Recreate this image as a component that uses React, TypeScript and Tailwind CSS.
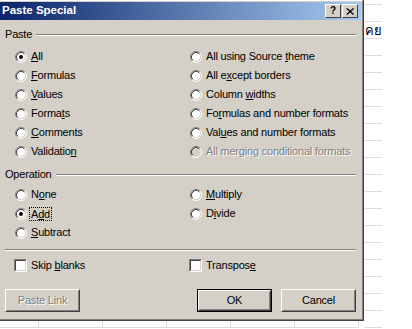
import React from 'react';

const Label = ({ text, u }: { text: string; u?: number }) =>
  u === undefined ? (
    <>{text}</>
  ) : (
    <>
      {text.slice(0, u)}
      <span className="underline underline-offset-[1px]">{text[u]}</span>
      {text.slice(u + 1)}
    </>
  );

const Radio = ({ checked, disabled }: { checked?: boolean; disabled?: boolean }) => (
  <svg width="12" height="12" viewBox="0 0 12 12" className="shrink-0">
    <circle cx="6" cy="6" r="4.5" fill={disabled ? '#d4d0c8' : '#ffffff'} />
    <path d="M2.11 9.89 A5.5 5.5 0 0 1 9.89 2.11" fill="none" stroke="#808080" strokeWidth="1" />
    <path d="M9.89 2.11 A5.5 5.5 0 0 1 2.11 9.89" fill="none" stroke="#ffffff" strokeWidth="1" />
    <path d="M2.82 9.18 A4.5 4.5 0 0 1 9.18 2.82" fill="none" stroke="#404040" strokeWidth="1" />
    <path d="M9.18 2.82 A4.5 4.5 0 0 1 2.82 9.18" fill="none" stroke="#d4d0c8" strokeWidth="1" />
    {checked && <circle cx="6" cy="6" r="2" fill="#000000" />}
  </svg>
);

type Opt = { text: string; u?: number; checked?: boolean; disabled?: boolean; focus?: boolean };

const RadioRow = ({ o }: { o: Opt }) => (
  <div className="h-[19px] flex items-center gap-[4px] whitespace-nowrap">
    <Radio checked={o.checked} disabled={o.disabled} />
    <span
      className={
        o.focus
          ? 'outline-1 outline-dotted outline-black px-[1px] -ml-[1px] leading-[12px]'
          : o.disabled
          ? 'text-[#808080] [text-shadow:1px_1px_0_#ffffff]'
          : ''
      }
    >
      <Label text={o.text} u={o.u} />
    </span>
  </div>
);

const Checkbox = ({ text, u }: { text: string; u: number }) => (
  <div className="h-[19px] flex items-center gap-[4px] whitespace-nowrap">
    <div className="w-[13px] h-[13px] border border-t-[#808080] border-l-[#808080] border-r-white border-b-white">
      <div className="w-full h-full bg-white border border-t-[#404040] border-l-[#404040] border-r-[#d4d0c8] border-b-[#d4d0c8]" />
    </div>
    <span>
      <Label text={text} u={u} />
    </span>
  </div>
);

const GroupLabel = ({ text }: { text: string }) => (
  <div className="h-[13px] flex items-center gap-[4px]">
    <span>{text}</span>
    <div className="flex-1 h-[2px] border-t border-t-[#808080] border-b border-b-white" />
  </div>
);

const Button = ({ text, isDefault, disabled }: { text: string; isDefault?: boolean; disabled?: boolean }) => (
  <div className={`w-[75px] h-[23px] ${isDefault ? 'border border-black' : ''}`}>
    <div className="w-full h-full border border-t-white border-l-white border-r-[#404040] border-b-[#404040]">
      <div
        className={`w-full h-full flex items-center justify-center border border-t-[#d4d0c8] border-l-[#d4d0c8] border-r-[#808080] border-b-[#808080] ${
          disabled ? 'text-[#808080] [text-shadow:1px_1px_0_#ffffff]' : ''
        }`}
      >
        {text}
      </div>
    </div>
  </div>
);

const pasteLeft: Opt[] = [
  { text: 'All', u: 0, checked: true },
  { text: 'Formulas', u: 0 },
  { text: 'Values', u: 0 },
  { text: 'Formats', u: 5 },
  { text: 'Comments', u: 0 },
  { text: 'Validation', u: 9 },
];

const pasteRight: Opt[] = [
  { text: 'All using Source theme', u: 17 },
  { text: 'All except borders', u: 5 },
  { text: 'Column widths', u: 7 },
  { text: 'Formulas and number formats', u: 2 },
  { text: 'Values and number formats', u: 3 },
  { text: 'All merging conditional formats', disabled: true },
];

const opLeft: Opt[] = [
  { text: 'None', u: 1 },
  { text: 'Add', u: 1, checked: true, focus: true },
  { text: 'Subtract', u: 0 },
];

const opRight: Opt[] = [
  { text: 'Multiply', u: 0 },
  { text: 'Divide', u: 1 },
];

export default function App() {
  return (
    <div className="w-[412px] h-[329px] bg-white overflow-hidden flex flex-col font-['Liberation_Sans',Arial,sans-serif] text-[11px] tracking-[-0.2px] text-black">
      <div className="flex h-[321px] shrink-0">
        {/* Dialog */}
        <div className="w-[364px] h-[321px] shrink-0 border-r border-b border-r-[#404040] border-b-[#404040]">
          <div className="w-full h-full bg-[#d4d0c8] border-t border-r border-b border-t-white border-r-[#808080] border-b-[#808080] pt-[1px] pr-[1px] flex flex-col">
            <div className="h-[18px] shrink-0 bg-[linear-gradient(to_right,#0a246a,#a6caf0)] flex items-center justify-between pl-[2px] pr-[3px]">
              <span className="text-white font-bold text-[11.5px] tracking-[0px]">Paste Special</span>
              <div className="flex gap-[1px]">
                <div className="w-[16px] h-[14px] bg-[#d4d0c8] border border-t-white border-l-white border-r-[#404040] border-b-[#404040] flex items-center justify-center font-bold text-[10px] leading-none">
                  ?
                </div>
                <div className="w-[16px] h-[14px] bg-[#d4d0c8] border border-t-white border-l-white border-r-[#404040] border-b-[#404040] flex items-center justify-center">
                  <svg width="8" height="7" viewBox="0 0 8 7">
                    <path d="M0.5 0.5 L7 6.5 M1.5 0.5 L8 6.5 M7 0.5 L0.5 6.5 M8 0.5 L1.5 6.5" stroke="#000" strokeWidth="1" />
                  </svg>
                </div>
              </div>
            </div>

            <div className="flex-1 flex flex-col pl-[5px] pr-[5px]">
              <div className="mt-[8px]">
                <GroupLabel text="Paste" />
              </div>
              <div className="mt-[6px] grid grid-cols-[175px_1fr] pl-[10px]">
                <div className="flex flex-col">
                  {pasteLeft.map((o) => (
                    <RadioRow key={o.text} o={o} />
                  ))}
                </div>
                <div className="flex flex-col">
                  {pasteRight.map((o) => (
                    <RadioRow key={o.text} o={o} />
                  ))}
                </div>
              </div>

              <div className="mt-[7px]">
                <GroupLabel text="Operation" />
              </div>
              <div className="mt-[4px] grid grid-cols-[175px_1fr] pl-[10px]">
                <div className="flex flex-col">
                  {opLeft.map((o) => (
                    <RadioRow key={o.text} o={o} />
                  ))}
                </div>
                <div className="flex flex-col">
                  {opRight.map((o) => (
                    <RadioRow key={o.text} o={o} />
                  ))}
                </div>
              </div>

              <div className="mt-[7px] h-[2px] border-t border-t-[#808080] border-b border-b-white" />

              <div className="mt-[5px] grid grid-cols-[175px_1fr] pl-[9px]">
                <Checkbox text="Skip blanks" u={5} />
                <Checkbox text="Transpose" u={8} />
              </div>

              <div className="mt-[14px] flex justify-between">
                <Button text="Paste Link" disabled />
                <div className="flex gap-[9px]">
                  <Button text="OK" isDefault />
                  <Button text="Cancel" />
                </div>
              </div>
            </div>
          </div>
        </div>

        {/* Sheet cells to the right */}
        <div className="w-[18px] flex flex-col">
          <div className="h-[5px] shrink-0 border-b border-[#dadcdd]" />
          {Array.from({ length: 19 }).map((_, i) => (
            <div key={i} className="h-[17px] shrink-0 border-b border-[#dadcdd] flex items-center pl-[1px] font-['DejaVu_Sans','Noto_Sans',sans-serif] text-[13px] tracking-normal leading-none whitespace-nowrap">
              {i === 1 ? 'คย' : ''}
            </div>
          ))}
        </div>
      </div>

      {/* Sheet cells below */}
      <div className="flex h-[8px] shrink-0">
        <div className="w-[39px] shrink-0 border-r border-b border-[#dadcdd] h-[7px]" />
        {Array.from({ length: 5 }).map((_, i) => (
          <div key={i} className="w-[64px] shrink-0 border-r border-b border-[#dadcdd] h-[7px]" />
        ))}
      </div>
    </div>
  );
}
